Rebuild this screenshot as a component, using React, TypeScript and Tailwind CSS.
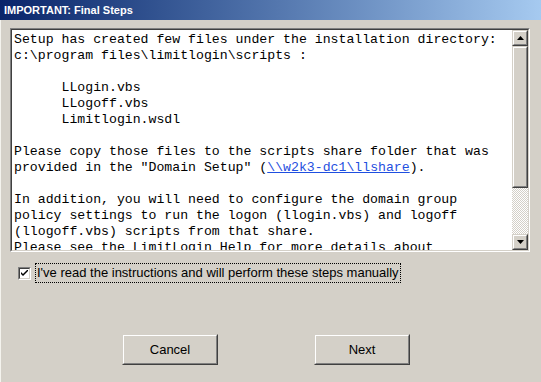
import React from 'react';

const lines: (string | React.ReactNode)[] = [
  'Setup has created few files under the installation directory:',
  'c:\\program files\\limitlogin\\scripts :',
  '',
  '      LLogin.vbs',
  '      LLogoff.vbs',
  '      Limitlogin.wsdl',
  '',
  'Please copy those files to the scripts share folder that was',
  <>
    provided in the "Domain Setup" (
    <span className="text-[#1f4fe0] underline">\\w2k3-dc1\llshare</span>).
  </>,
  '',
  'In addition, you will need to configure the domain group',
  'policy settings to run the logon (llogin.vbs) and logoff',
  '(llogoff.vbs) scripts from that share.',
  'Please see the LimitLogin Help for more details about',
  'how to configure the group policy.',
];

function Raised({ className = '', children }: { className?: string; children?: React.ReactNode }) {
  return (
    <div className={`border border-t-[#d4d0c8] border-l-[#d4d0c8] border-b-[#404040] border-r-[#404040] ${className}`}>
      <div className="w-full h-full border border-t-white border-l-white border-b-[#808080] border-r-[#808080] bg-[#d4d0c8] flex items-center justify-center">
        {children}
      </div>
    </div>
  );
}

function Arrow({ up }: { up?: boolean }) {
  return (
    <svg width="7" height="4" viewBox="0 0 7 4">
      {up ? <path d="M3.5 0 L7 4 L0 4 Z" fill="#000" /> : <path d="M0 0 L7 0 L3.5 4 Z" fill="#000" />}
    </svg>
  );
}

export default function App() {
  return (
    <div className="w-[541px] h-[382px] bg-[#d4d0c8] flex flex-col overflow-hidden font-['Liberation_Sans',Arial,sans-serif]">
      <div className="h-[20px] shrink-0 flex items-center pl-[4px] bg-gradient-to-r from-[#0a246a] to-[#a6caf0]">
        <span className="text-white font-bold text-[11px]">IMPORTANT: Final Steps</span>
      </div>

      <div className="flex-1 flex flex-col border-l border-l-[#f4f3ee]">
        <div className="mt-[8px] ml-[9px] w-[520px] h-[224px] border border-t-[#808080] border-l-[#808080] border-b-white border-r-white">
          <div className="w-full h-full border border-t-[#404040] border-l-[#404040] border-b-[#d4d0c8] border-r-[#d4d0c8] bg-white flex">
            <div className="flex-1 overflow-hidden pl-[2px] pt-[2px] font-['Liberation_Mono','Courier_New',monospace] text-[13.2px] leading-[16px] text-black whitespace-pre">
              {lines.map((l, i) => (
                <div key={i} className="h-[16px]">{l}</div>
              ))}
            </div>
            <div className="w-[16px] shrink-0 flex flex-col">
              <Raised className="h-[16px] shrink-0">
                <Arrow up />
              </Raised>
              <Raised className="h-[142px] shrink-0" />
              <div className="flex-1 bg-[repeating-conic-gradient(#ffffff_0%_25%,#d4d0c8_0%_50%)] bg-[length:2px_2px]" />
              <Raised className="h-[16px] shrink-0">
                <Arrow />
              </Raised>
            </div>
          </div>
        </div>

        <div className="mt-[11px] ml-[17px] flex items-center gap-[4px]">
          <div className="w-[13px] h-[13px] border border-t-[#808080] border-l-[#808080] border-b-white border-r-white">
            <div className="w-full h-full border border-t-[#404040] border-l-[#404040] border-b-[#d4d0c8] border-r-[#d4d0c8] bg-white flex items-center justify-center">
              <svg width="7" height="7" viewBox="0 0 7 7">
                <path d="M0 2 L0 4 L2 6 L7 1 L7 -1 L2 4 Z" fill="#000" />
              </svg>
            </div>
          </div>
          <div className="border border-dotted border-black px-[1px] py-[1px] flex items-center text-[13px] leading-[16px] text-black">
            I've read the instructions and will perform these steps manually
          </div>
        </div>

        <div className="mt-[51px] pl-[121px] flex gap-[96px]">
          <Raised className="w-[96px] h-[31px]">
            <span className="text-[13px] text-black">Cancel</span>
          </Raised>
          <Raised className="w-[96px] h-[31px]">
            <span className="text-[13px] text-black">Next</span>
          </Raised>
        </div>
      </div>
    </div>
  );
}
